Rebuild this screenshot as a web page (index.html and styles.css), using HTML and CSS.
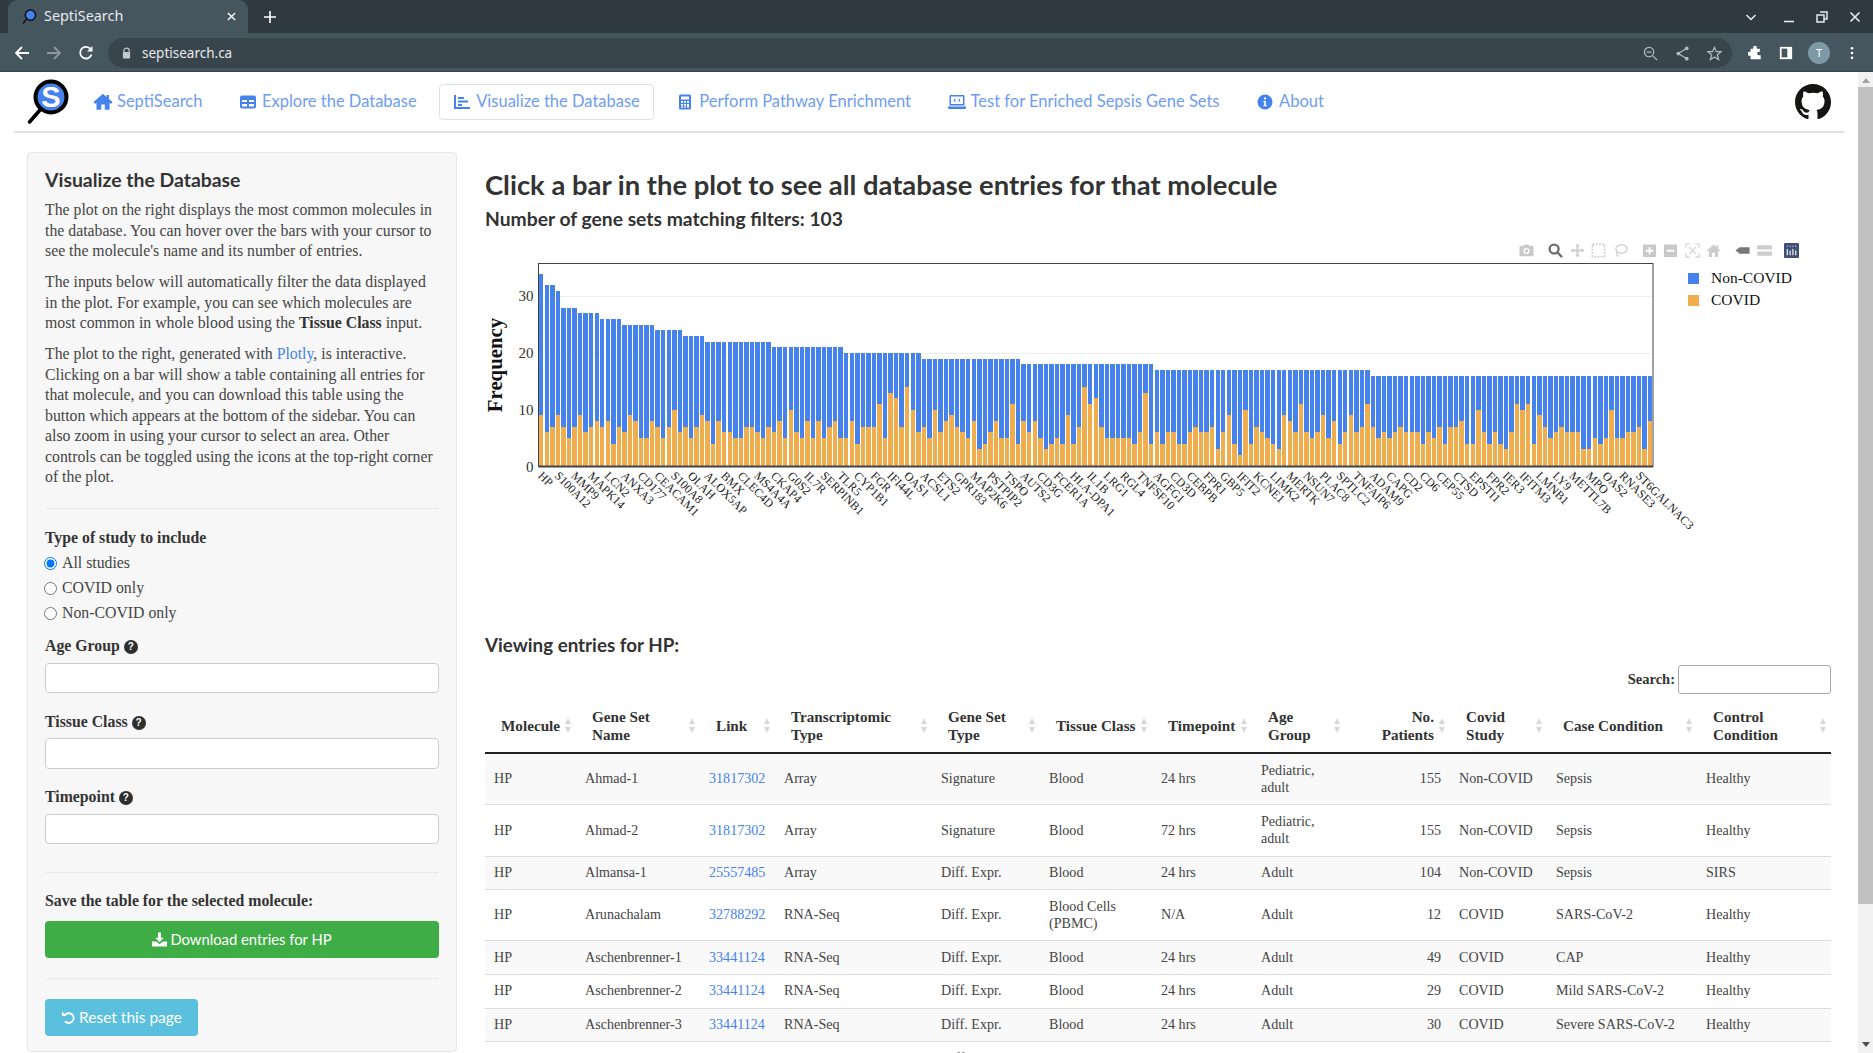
FILE: index.html
```html
<!DOCTYPE html>
<html lang="en">

<head>
    <meta charset="UTF-8">
    <meta name="viewport" content="width=device-width, initial-scale=1.0">
    <title>SeptiSearch</title>
    <link rel="stylesheet" href="styles.css">
</head>

<body>
    <!-- browser frame -->
    <div class="tab_strip">
        <div class="tab">
            <svg class="favicon" viewBox="0 0 16 16">
                <circle cx="9" cy="6.5" r="5.5" fill="#4582ec" stroke="#111" stroke-width="1.6"/>
                <path d="M5 10.5 1.5 15" stroke="#111" stroke-width="1.6" stroke-linecap="round"/>
            </svg>
            <span class="tab_title">SeptiSearch</span>
            <svg class="tab_close" viewBox="0 0 10 10"><path d="M1 1 9 9M9 1 1 9" stroke="#fff" stroke-width="1.5"/></svg>
        </div>
        <svg class="new_tab" viewBox="0 0 12 12"><path d="M6 0V12M0 6H12" stroke="#fff" stroke-width="1.6"/></svg>
        <div class="window_controls">
            <svg class="chevron" viewBox="0 0 12 12"><path d="M1.5 4 6 8.5 10.5 4" fill="none" stroke="#e8eaed" stroke-width="1.5"/></svg>
            <svg viewBox="0 0 12 12"><path d="M1 10.5H11" stroke="#e8eaed" stroke-width="1.6"/></svg>
            <svg viewBox="0 0 12 12"><path d="M4 1H11V8H8.5M1 4H8V11H1Z" fill="none" stroke="#e8eaed" stroke-width="1.5"/></svg>
            <svg viewBox="0 0 12 12"><path d="M1.5 1.5 10.5 10.5M10.5 1.5 1.5 10.5" stroke="#e8eaed" stroke-width="1.6"/></svg>
        </div>
    </div>
    <div class="toolbar">
        <svg class="tool_icon" viewBox="0 0 16 16"><path d="M15 8H2M8 2 2 8 8 14" fill="none" stroke="#fff" stroke-width="1.8"/></svg>
        <svg class="tool_icon" viewBox="0 0 16 16"><path d="M1 8H14M8 2 14 8 8 14" fill="none" stroke="#8c979e" stroke-width="1.8"/></svg>
        <svg class="tool_icon" viewBox="0 0 16 16"><path d="M13.5 9.5A5.8 5.8 0 1 1 12 3.5" fill="none" stroke="#fff" stroke-width="1.8"/><path d="M14.5 1V6.5H9Z" fill="#fff"/></svg>
        <div class="address_bar">
            <svg class="lock" viewBox="0 0 10 13"><path d="M2 6V4a3 3 0 0 1 6 0V6" fill="none" stroke="#c4c9cc" stroke-width="1.3"/><rect x="1" y="5.5" width="8" height="7" rx="1" fill="#c4c9cc"/></svg>
            <span class="url">septisearch.ca</span>
            <div class="address_icons">
                <svg viewBox="0 0 16 16"><circle cx="6.5" cy="6.5" r="5" fill="none" stroke="#b4bbc0" stroke-width="1.3"/><path d="M4 6.5H9M10.5 10.5 15 15" stroke="#b4bbc0" stroke-width="1.3"/></svg>
                <svg viewBox="0 0 16 16"><path d="M12.5 2.5 3.5 8 12.5 13.5" fill="none" stroke="#b4bbc0" stroke-width="1.2"/><circle cx="12.5" cy="2.5" r="2" fill="#b4bbc0"/><circle cx="3.5" cy="8" r="2" fill="#b4bbc0"/><circle cx="12.5" cy="13.5" r="2" fill="#b4bbc0"/></svg>
                <svg viewBox="0 0 16 16"><path d="M8 1.5 10 6H15L11 9.3 12.4 14.5 8 11.6 3.6 14.5 5 9.3 1 6H6Z" fill="none" stroke="#b4bbc0" stroke-width="1.3"/></svg>
            </div>
        </div>
        <div class="toolbar_right">
            <svg viewBox="0 0 16 16"><path d="M6 1.5a2 2 0 0 1 4 0V3h3.5V6.5h-1a2 2 0 0 0 0 4h2V15H3V11H1.5a2.2 2.2 0 0 1 0-4.4H3V3h3Z" fill="#fff"/></svg>
            <svg viewBox="0 0 16 16"><rect x="1" y="1" width="14" height="14" fill="#fff"/><rect x="3" y="3" width="6.5" height="10" fill="#45565f"/></svg>
            <span class="avatar">T</span>
            <svg viewBox="0 0 16 16"><circle cx="8" cy="2.5" r="1.5" fill="#fff"/><circle cx="8" cy="8" r="1.5" fill="#fff"/><circle cx="8" cy="13.5" r="1.5" fill="#fff"/></svg>
        </div>
    </div>

    <div class="viewport">
        <div class="page">
            <nav class="navbar">
                <svg class="logo" viewBox="0 0 44 46">
                    <circle cx="24" cy="18" r="15.5" fill="#4582ec" stroke="#000" stroke-width="4"/>
                    <path d="M13 31 2.5 43" stroke="#000" stroke-width="3.5" stroke-linecap="round"/>
                    <text class="logo_letter" x="24" y="28">S</text>
                </svg>
                <ul class="nav_links">
                    <li><a class="nav_link" href="#">
                        <svg class="home_icon" viewBox="0 0 16 16"><path d="M8 1.5 0 8.5 1.3 10 2.5 9V15H6.5V10.5H9.5V15H13.500V9L14.700 10 16 8.5 13 5.900V2.500H11V4.200Z"/></svg>SeptiSearch</a></li>
                    <li><a class="nav_link" href="#">
                        <svg viewBox="0 0 16 16"><path d="M2 1.5H14A2 2 0 0 1 16 3.5V12.5A2 2 0 0 1 14 14.5H2A2 2 0 0 1 0 12.5V3.5A2 2 0 0 1 2 1.5ZM2 6V8H7V6ZM9 6V8H14V6ZM2 10V12.5H7V10ZM9 10V12.5H14V10Z" fill-rule="evenodd"/></svg>Explore the Database</a></li>
                    <li><a class="nav_link active" href="#">
                        <svg viewBox="0 0 16 16"><path d="M0 1H2V13H16V15H0ZM4 3H10V5H4ZM4 6.5H14V8.5H4ZM4 10H8V12H4Z"/></svg>Visualize the Database</a></li>
                    <li><a class="nav_link" href="#">
                        <svg viewBox="0 0 16 16"><path d="M3.5 0.5H12.5A1.5 1.5 0 0 1 14 2V14A1.5 1.5 0 0 1 12.5 15.5H3.5A1.5 1.5 0 0 1 2 14V2A1.5 1.5 0 0 1 3.5 0.5ZM4 2.5V5.5H12V2.5ZM4 7V8.7H6V7ZM7 7V8.7H9V7ZM10 7V8.7H12V7ZM4 10V11.7H6V10ZM7 10V11.7H9V10ZM10 10V13.5H12V10ZM4 12.5V13.8H6V12.5ZM7 12.5V13.8H9V12.5Z" fill-rule="evenodd"/></svg>Perform Pathway Enrichment</a></li>
                    <li><a class="nav_link" href="#">
                        <svg viewBox="0 0 18 16"><path d="M2.5 1H15.5A1 1 0 0 1 16.5 2V11.5H1.5V2A1 1 0 0 1 2.5 1ZM3 2.5V10H15V2.5ZM0 12.5H18V13.5A1.5 1.5 0 0 1 16.5 15H1.5A1.5 1.5 0 0 1 0 13.5ZM7 4.5 5.5 6.2 7 8 7.8 7.4 6.9 6.2 7.8 5.1ZM11 4.5 12.5 6.2 11 8 10.2 7.4 11.1 6.2 10.2 5.1Z" fill-rule="evenodd"/></svg>Test for Enriched Sepsis Gene Sets</a></li>
                    <li><a class="nav_link" href="#">
                        <svg viewBox="0 0 16 16"><path d="M8 0.5A7.5 7.5 0 1 1 8 15.5 7.5 7.5 0 0 1 8 0.5ZM7 3.5V5.5H9V3.5ZM6.5 7V8.3H7.3V11H6.5V12.3H9.7V11H8.9V7Z" fill-rule="evenodd"/></svg>About</a></li>
                </ul>
                <svg class="github" viewBox="0 0 16 16"><path d="M8 0C3.58 0 0 3.58 0 8c0 3.54 2.29 6.53 5.47 7.59.4.07.55-.17.55-.38 0-.19-.01-.82-.01-1.49-2.01.37-2.53-.49-2.69-.94-.09-.23-.48-.94-.82-1.13-.28-.15-.68-.52-.01-.53.63-.01 1.08.58 1.23.82.72 1.21 1.87.87 2.33.66.07-.52.28-.87.51-1.07-1.78-.2-3.64-.89-3.64-3.95 0-.87.31-1.59.82-2.15-.08-.2-.36-1.02.08-2.12 0 0 .67-.21 2.2.82.64-.18 1.32-.27 2-.27s1.36.09 2 .27c1.53-1.04 2.2-.82 2.2-.82.44 1.1.16 1.92.08 2.12.51.56.82 1.27.82 2.15 0 3.07-1.87 3.75-3.65 3.95.29.25.54.73.54 1.48 0 1.07-.01 1.93-.01 2.2 0 .21.15.46.55.38A8.013 8.013 0 0016 8c0-4.42-3.58-8-8-8z"/></svg>
            </nav>

            <div class="content">
                <aside class="sidebar">
                    <h3 class="side_title">Visualize the Database</h3>
                    <p>The plot on the right displays the most common molecules in the database. You can hover over the bars with your cursor to see the molecule's name and its number of entries.</p>
                    <p>The inputs below will automatically filter the data displayed in the plot. For example, you can see which molecules are most common in whole blood using the <strong>Tissue Class</strong> input.</p>
                    <p>The plot to the right, generated with <a href="#">Plotly</a>, is interactive. Clicking on a bar will show a table containing all entries for that molecule, and you can download this table using the button which appears at the bottom of the sidebar. You can also zoom in using your cursor to select an area. Other controls can be toggled using the icons at the top-right corner of the plot.</p>
                    <hr class="rule_top">

                    <div class="field_label study_label">Type of study to include</div>
                    <label class="radio_row"><input type="radio" name="study" checked>All studies</label>
                    <label class="radio_row"><input type="radio" name="study">COVID only</label>
                    <label class="radio_row"><input type="radio" name="study">Non-COVID only</label>

                    <div class="field_label age_label">Age Group <span class="help">?</span></div>
                    <input class="text_input" type="text">
                    <div class="field_label next_label">Tissue Class <span class="help">?</span></div>
                    <input class="text_input" type="text">
                    <div class="field_label next_label">Timepoint <span class="help">?</span></div>
                    <input class="text_input" type="text">
                    <hr class="rule_filters">

                    <div class="field_label save_label">Save the table for the selected molecule:</div>
                    <button class="btn btn_download">
                        <svg viewBox="0 0 16 16"><path d="M6.5 0.5H9.5V6H12.5L8 10.8 3.5 6H6.5ZM0 10H4.5L8 13 11.5 10H16V15.5H0Z"/></svg>Download entries for HP</button>
                    <hr class="rule_save">
                    <button class="btn btn_reset">
                        <svg viewBox="0 0 16 16"><path d="M1 1.5 5.8 6.3H1ZM3 5A6.3 6.3 0 1 1 3.5 12.8L5 11.3A4.2 4.2 0 1 0 4.8 6.3Z"/></svg>Reset this page</button>
                </aside>

                <main class="main">
                    <h2 class="main_title">Click a bar in the plot to see all database entries for that molecule</h2>
                    <div class="match_count">Number of gene sets matching filters: 103</div>

                    <div class="plot">
                        <svg id="plot_svg" class="plot_svg" width="1346" height="392"></svg>
                        <div class="modebar">
                            <svg viewBox="0 0 16 16"><path d="M5 3 6 1.5H10L11 3H14.5A1 1 0 0 1 15.5 4V13A1 1 0 0 1 14.5 14H1.5A1 1 0 0 1 0.5 13V4A1 1 0 0 1 1.5 3ZM8 5.2A3.3 3.3 0 1 0 8 11.8 3.3 3.3 0 0 0 8 5.2ZM8 6.7A1.8 1.8 0 1 1 8 10.3 1.8 1.8 0 0 1 8 6.7Z" fill-rule="evenodd" fill="#c9c9c9"/></svg>
                            <svg class="gap_left" viewBox="0 0 16 16"><circle cx="6.5" cy="6.5" r="4.8" fill="none" stroke="#6f6f6f" stroke-width="2.5"/><path d="M10 10 15 15" stroke="#6f6f6f" stroke-width="2.5"/></svg>
                            <svg viewBox="0 0 16 16"><path d="M8 0.5 10.5 3.5H9V7H12.5V5.5L15.5 8 12.5 10.5V9H9V12.5H10.5L8 15.5 5.5 12.5H7V9H3.5V10.5L0.5 8 3.5 5.5V7H7V3.5H5.5Z" fill="#cdcdcd"/></svg>
                            <svg viewBox="0 0 16 16"><rect x="1.5" y="1.5" width="13" height="13" fill="none" stroke="#cdcdcd" stroke-width="1.8" stroke-dasharray="2 1.5"/></svg>
                            <svg viewBox="0 0 16 16"><ellipse cx="9" cy="6.5" rx="6" ry="4.5" fill="none" stroke="#cdcdcd" stroke-width="1.3"/><path d="M4.5 9.5C3.5 11 4 13 6 14.5" fill="none" stroke="#cdcdcd" stroke-width="1.3"/></svg>
                            <svg class="gap_left" viewBox="0 0 16 16"><path d="M1 1.5H15V15H1ZM7 4.5V7.3H4V9.2H7V12H9V9.2H12V7.3H9V4.5Z" fill-rule="evenodd" fill="#c9c9c9"/></svg>
                            <svg viewBox="0 0 16 16"><path d="M1 1.5H15V15H1ZM4 7.3V9.2H12V7.3Z" fill-rule="evenodd" fill="#c9c9c9"/></svg>
                            <svg viewBox="0 0 16 16"><path d="M1 5V1H5M11 1H15V5M15 11V15H11M5 15H1V11M4.5 4.5 11.5 11.5M11.5 4.5 4.5 11.5" fill="none" stroke="#cdcdcd" stroke-width="1.2"/></svg>
                            <svg viewBox="0 0 16 16"><path d="M8 1.5 0.5 8.5H3V15H6.5V10.5H9.5V15H13V8.5H15.5L13 6.2V2.5H11V4.3Z" fill="#cdcdcd"/></svg>
                            <svg class="gap_left" viewBox="0 0 16 16"><path d="M0.5 8 5 4.5H15.5V11.5H5Z" fill="#777"/></svg>
                            <svg viewBox="0 0 16 16"><path d="M2 2.5H14.5A2.2 2.2 0 0 1 14.5 7H2A2.2 2.2 0 0 1 2 2.5ZM2 9H14.5A2.2 2.2 0 0 1 14.5 13.5H2A2.2 2.2 0 0 1 2 9Z" fill="#cdcdcd"/></svg>
                            <svg class="gap_logo" viewBox="0 0 16 16"><rect width="16" height="16" rx="1" fill="#3f4f75"/><path d="M3.5 6.5V13M6.5 8V13M9.5 6.5V13M12.5 8V13" stroke="#fff" stroke-width="1.2"/><path d="M3 3.5H4M6 3.5H7M9 3.5H10M12 3.5H13" stroke="#fff" stroke-width="1.2"/></svg>
                        </div>
                    </div>

                    <h3 class="view_title">Viewing entries for HP:</h3>
                    <div class="search_row">
                        <label class="search_label" for="search_box">Search:</label>
                        <input id="search_box" class="search_box" type="text">
                    </div>

                    <table class="entries">
                        <colgroup>
                            <col class="c1"><col class="c2"><col class="c3"><col class="c4"><col class="c5"><col class="c6">
                            <col class="c7"><col class="c8"><col class="c9"><col class="c10"><col class="c11"><col class="c12">
                        </colgroup>
                        <thead>
                            <tr>
                                <th>Molecule</th>
                                <th>Gene Set<br>Name</th>
                                <th>Link</th>
                                <th>Transcriptomic<br>Type</th>
                                <th>Gene Set<br>Type</th>
                                <th>Tissue Class</th>
                                <th>Timepoint</th>
                                <th>Age<br>Group</th>
                                <th class="num">No.<br>Patients</th>
                                <th>Covid<br>Study</th>
                                <th>Case Condition</th>
                                <th>Control<br>Condition</th>
                            </tr>
                        </thead>
                        <tbody>
                            <tr><td>HP</td><td>Ahmad-1</td><td><a href="#">31817302</a></td><td>Array</td><td>Signature</td><td>Blood</td><td>24 hrs</td><td>Pediatric,<br>adult</td><td class="num">155</td><td>Non-COVID</td><td>Sepsis</td><td>Healthy</td></tr>
                            <tr><td>HP</td><td>Ahmad-2</td><td><a href="#">31817302</a></td><td>Array</td><td>Signature</td><td>Blood</td><td>72 hrs</td><td>Pediatric,<br>adult</td><td class="num">155</td><td>Non-COVID</td><td>Sepsis</td><td>Healthy</td></tr>
                            <tr><td>HP</td><td>Almansa-1</td><td><a href="#">25557485</a></td><td>Array</td><td>Diff. Expr.</td><td>Blood</td><td>24 hrs</td><td>Adult</td><td class="num">104</td><td>Non-COVID</td><td>Sepsis</td><td>SIRS</td></tr>
                            <tr><td>HP</td><td>Arunachalam</td><td><a href="#">32788292</a></td><td>RNA-Seq</td><td>Diff. Expr.</td><td>Blood Cells<br>(PBMC)</td><td>N/A</td><td>Adult</td><td class="num">12</td><td>COVID</td><td>SARS-CoV-2</td><td>Healthy</td></tr>
                            <tr><td>HP</td><td>Aschenbrenner-1</td><td><a href="#">33441124</a></td><td>RNA-Seq</td><td>Diff. Expr.</td><td>Blood</td><td>24 hrs</td><td>Adult</td><td class="num">49</td><td>COVID</td><td>CAP</td><td>Healthy</td></tr>
                            <tr><td>HP</td><td>Aschenbrenner-2</td><td><a href="#">33441124</a></td><td>RNA-Seq</td><td>Diff. Expr.</td><td>Blood</td><td>24 hrs</td><td>Adult</td><td class="num">29</td><td>COVID</td><td>Mild SARS-CoV-2</td><td>Healthy</td></tr>
                            <tr><td>HP</td><td>Aschenbrenner-3</td><td><a href="#">33441124</a></td><td>RNA-Seq</td><td>Diff. Expr.</td><td>Blood</td><td>24 hrs</td><td>Adult</td><td class="num">30</td><td>COVID</td><td>Severe SARS-CoV-2</td><td>Healthy</td></tr>
                            <tr><td>HP</td><td>Baghela-1</td><td><a href="#">35030348</a></td><td>RNA-Seq</td><td>Diff. Expr.</td><td>Blood</td><td>24 hrs</td><td>Adult</td><td class="num">82</td><td>Non-COVID</td><td>Sepsis</td><td>Mild</td></tr>
                        </tbody>
                    </table>
                </main>
            </div>
        </div>

        <div class="scrollbar">
            <span class="arrow_up"></span>
            <span class="thumb"></span>
            <span class="arrow_down"></span>
        </div>
    </div>

    <script src="chart.js"></script>
</body>

</html>
```

FILE: styles.css
```css
* {
    box-sizing: border-box;
}

html,
body {
    height: 1053px;
    margin: 0;
    overflow: hidden;
}

body {
    font-family: "Liberation Serif", serif;
    font-size: 15.8px;
    line-height: 20.5px;
    color: #444;
    background-color: #fff;
    display: flex;
    flex-direction: column;
}

a {
    color: #4582ec;
    text-decoration: none;
}

/* browser frame */
.tab_strip {
    height: 33px;
    flex: none;
    background-color: #2e3a40;
    display: flex;
    align-items: flex-end;
    padding-left: 8px;
}

.tab {
    width: 240px;
    height: 33px;
    background-color: #45565f;
    border-radius: 9px 9px 0 0;
    display: flex;
    align-items: center;
    padding: 0 12px 0 14px;
    color: #e8eaed;
    font-family: "Noto Sans", sans-serif;
    font-size: 14.4px;
}

.favicon {
    width: 15px;
    height: 17px;
    margin-right: 7px;
}

.tab_title {
    flex: 1;
}

.tab_close {
    width: 9px;
    height: 9px;
}

.new_tab {
    width: 12px;
    height: 12px;
    margin: 0 0 10px 16px;
}

.window_controls {
    margin-left: auto;
    height: 33px;
    display: flex;
    align-items: center;
    gap: 21px;
    padding-right: 12px;
}

.window_controls svg {
    width: 12px;
    height: 12px;
}

.window_controls .chevron {
    margin-right: 5px;
}

.toolbar {
    height: 39px;
    flex: none;
    background-color: #45565f;
    display: flex;
    align-items: center;
    padding: 2px 0 0 14px;
    border-bottom: 1px solid #39454c;
}

.tool_icon {
    width: 16px;
    height: 16px;
    margin-right: 16px;
}

.address_bar {
    margin-left: -2px;
    width: 1624px;
    height: 30px;
    background-color: #38454d;
    border-radius: 15px;
    display: flex;
    align-items: center;
    padding: 0 10px 0 14px;
    color: #e8eaed;
    font-family: "Noto Sans", sans-serif;
    font-size: 13.5px;
}

.lock {
    width: 9px;
    height: 12px;
    margin-right: 11px;
}

.address_icons {
    margin-left: auto;
    display: flex;
    gap: 17px;
}

.address_icons svg {
    width: 15px;
    height: 15px;
}

.toolbar_right {
    display: flex;
    align-items: center;
    margin-left: 16px;
    gap: 17px;
}

.toolbar_right svg {
    width: 14px;
    height: 14px;
}

.avatar {
    width: 22px;
    height: 22px;
    border-radius: 50%;
    background-color: #7f98a6;
    color: #fff;
    font-family: "Noto Sans", sans-serif;
    font-size: 11px;
    line-height: 22px;
    text-align: center;
    margin: 0 -2px;
}

/* page */
.viewport {
    flex: 1;
    min-height: 0;
    display: flex;
}

.page {
    flex: 1;
    min-width: 0;
    overflow: hidden;
}

.scrollbar {
    width: 15px;
    flex: none;
    background-color: #f1f1f1;
    display: flex;
    flex-direction: column;
    align-items: center;
    padding: 6px 0;
}

.arrow_up {
    border: 4px solid transparent;
    border-top: 0;
    border-bottom: 5px solid #a3a3a3;
    margin-bottom: 4px;
}

.thumb {
    width: 15px;
    height: 817px;
    background-color: #c1c1c1;
}

.arrow_down {
    border: 4px solid transparent;
    border-bottom: 0;
    border-top: 5px solid #505050;
    margin-top: auto;
}

.navbar {
    height: 61px;
    margin: 0 14px;
    border-bottom: 2px solid #dee2e6;
    display: flex;
    align-items: center;
    padding-left: 13px;
}

.logo {
    width: 44px;
    height: 46px;
    flex: none;
}

.logo_letter {
    font-family: "Liberation Sans", sans-serif;
    font-size: 29px;
    font-weight: 700;
    fill: #fff;
    text-anchor: middle;
}

.nav_links {
    display: flex;
    align-items: center;
    gap: 8.5px;
    list-style: none;
    margin: 0 0 0 8px;
    padding: 0;
}

.nav_link {
    display: flex;
    align-items: center;
    height: 36px;
    padding: 0 13px;
    border: 1px solid transparent;
    border-radius: 4px;
    font-family: Lato, sans-serif;
    font-size: 16.5px;
    color: #6f9df0;
}

.nav_link svg {
    width: 18px;
    height: 16px;
    margin-right: 5px;
    fill: #4582ec;
}

.nav_link .home_icon {
    width: 20px;
    height: 19px;
    margin-right: 4px;
}

.nav_link.active {
    border-color: #dee2e6;
}

.github {
    width: 36px;
    height: 36px;
    margin-left: auto;
    margin-right: 13px;
    fill: #151513;
}

.content {
    display: flex;
    gap: 28px;
    padding: 19px 27px 0;
    align-items: flex-start;
}

/* sidebar */
.sidebar {
    width: 430px;
    height: 900px;
    flex: none;
    background-color: #f7f7f7;
    border: 1px solid #e7e7e7;
    border-radius: 4px;
    padding: 16px 17px 0;
}

.side_title {
    margin: 0 0 9px;
    font-family: Lato, sans-serif;
    font-size: 19.4px;
    line-height: 22px;
    font-weight: 700;
    color: #333;
}

.sidebar p {
    margin: 0 0 10.5px;
}

.sidebar strong {
    color: #333;
}

hr {
    border: 0;
    border-top: 1px solid #e9e9e9;
    margin: 0;
}

.rule_top {
    margin-top: 20px;
}

.field_label {
    font-weight: 700;
    color: #333;
}

.study_label {
    margin-top: 19px;
    margin-bottom: 3px;
}

.radio_row {
    display: flex;
    align-items: center;
    height: 25px;
}

.radio_row input {
    width: 13px;
    height: 13px;
    margin: 0 5px 0 -1px;
}

.age_label {
    margin-top: 10px;
    margin-bottom: 6px;
}

.next_label {
    margin-top: 18.5px;
    margin-bottom: 6px;
}

.help {
    display: inline-block;
    width: 14px;
    height: 14px;
    border-radius: 50%;
    background-color: #2f2f2f;
    color: #fff;
    font-family: "Liberation Sans", sans-serif;
    font-size: 10px;
    line-height: 14px;
    text-align: center;
    vertical-align: 1px;
}

.text_input {
    display: block;
    width: 100%;
    height: 30.5px;
    border: 1px solid #ccc;
    border-radius: 4px;
    background-color: #fff;
}

.rule_filters {
    margin-top: 28px;
}

.save_label {
    margin-top: 18px;
    margin-bottom: 9px;
}

.btn {
    display: flex;
    align-items: center;
    justify-content: center;
    height: 37px;
    border: 0;
    border-radius: 4px;
    color: #fff;
    font-family: Lato, sans-serif;
    font-size: 15.5px;
}

.btn svg {
    width: 15px;
    height: 15px;
    margin-right: 3px;
    fill: #fff;
}

.btn_download {
    width: 100%;
    background-color: #3fad46;
    font-size: 14.8px;
}

.rule_save {
    margin-top: 20px;
    margin-bottom: 20px;
}

.btn_reset {
    width: 153px;
    background-color: #5bc0de;
}

/* main column */
.main {
    width: 1346px;
    flex: none;
}

.main_title {
    margin: 17px 0 0;
    font-family: Lato, sans-serif;
    font-size: 27.4px;
    line-height: 32px;
    font-weight: 700;
    color: #333;
}

.match_count {
    margin-top: 7px;
    font-family: Lato, sans-serif;
    font-size: 19.3px;
    line-height: 22px;
    font-weight: 700;
    color: #333;
}

.plot {
    position: relative;
    height: 392px;
    margin-top: 11px;
}

.plot_svg {
    display: block;
}

.bar_total {
    fill: #4582ec;
}

.bar_covid {
    fill: #f0ad4e;
}

.grid_line {
    stroke: #eeeeee;
}

.plot_frame {
    fill: none;
    stroke: #444;
    stroke-width: 1;
}

.tick_y {
    font-size: 15px;
    fill: #333;
    text-anchor: end;
}

.tick_x {
    font-size: 12px;
    fill: #222;
}

.axis_title {
    font-size: 20.8px;
    font-weight: 700;
    fill: #111;
    text-anchor: middle;
}

.legend_text {
    font-size: 15.5px;
    fill: #111;
}

.modebar {
    position: absolute;
    top: 2px;
    right: 32.5px;
    display: flex;
    gap: 6.5px;
}

.modebar svg {
    width: 15px;
    height: 15px;
}

.modebar .gap_left {
    margin-left: 7.5px;
}

.modebar .gap_logo {
    margin-left: 5.5px;
}

.view_title {
    margin: 0;
    font-family: Lato, sans-serif;
    font-size: 18.8px;
    line-height: 24px;
    font-weight: 700;
    color: #333;
}

.search_row {
    display: flex;
    justify-content: flex-end;
    align-items: center;
    margin-top: 8px;
}

.search_label {
    font-weight: 700;
    font-size: 14.5px;
    color: #333;
    margin-right: 3px;
}

.search_box {
    width: 153px;
    height: 29px;
    border: 1px solid #aaa;
    border-radius: 3px;
    background-color: #fff;
}

.entries {
    width: 1346px;
    table-layout: fixed;
    border-collapse: collapse;
    margin-top: 5px;
    font-size: 14.1px;
    line-height: 17.6px;
}

.c1 { width: 91px; }
.c2 { width: 124px; }
.c3 { width: 75px; }
.c4 { width: 157px; }
.c5 { width: 108px; }
.c6 { width: 112px; }
.c7 { width: 100px; }
.c8 { width: 93px; }
.c9 { width: 105px; }
.c10 { width: 97px; }
.c11 { width: 150px; }
.c12 { width: 134px; }

.entries th {
    position: relative;
    padding: 9px 16px 9px 16px;
    border-bottom: 2px solid #222;
    text-align: left;
    font-size: 15.2px;
    font-weight: 700;
    color: #333;
    white-space: nowrap;
}

/* sort arrows */
.entries th::before,
.entries th::after {
    content: "";
    position: absolute;
    right: 5px;
    top: 50%;
    border: 3.5px solid transparent;
}

.entries th::before {
    margin-top: -8px;
    border-top: 0;
    border-bottom: 6px solid #d8d8d8;
}

.entries th::after {
    margin-top: 1px;
    border-bottom: 0;
    border-top: 6px solid #d8d8d8;
}

.entries td {
    padding: 7.5px 9px;
    border-top: 1px solid #ddd;
    vertical-align: middle;
    white-space: nowrap;
}

.entries tbody tr:first-child td {
    border-top: 0;
}

.entries tbody tr:nth-child(odd) {
    background-color: #f9f9f9;
}

.entries .num {
    text-align: right;
}
```

FILE: chart.js
```js
// stacked bars for the top molecules, drawn into the svg
const runs = [[34, 1], [32, 2], [31, 1], [28, 3], [27, 4], [26, 4], [25, 6], [24, 5], [23, 4], [22, 12], [21, 13],
    [20, 14], [19, 18], [18, 24], [17, 39], [16, 51]];
const covid = [9, 6, 7, 9, 7, 5, 7, 9, 6, 7, 8, 7, 8, 4, 7, 6, 9, 8, 5, 5, 8, 7, 5, 7, 10, 6, 7, 5, 7, 9, 8, 4, 8, 6, 6, 5, 5,
    7, 7, 6, 5, 7, 6, 8, 5, 10, 6, 5, 8, 5, 8, 5, 7, 8, 5, 5, 8, 4, 7, 7, 7, 11, 5, 13, 12, 7, 14, 10, 6, 7, 5, 10,
    6, 8, 9, 7, 6, 5, 8, 3, 4, 6, 8, 5, 5, 11, 4, 8, 6, 8, 5, 3, 4, 5, 4, 9, 4, 7,
    14, 11, 12, 7, 5, 5, 5, 5, 5, 4, 6, 13, 4,
    6, 4, 6, 6, 4, 4, 6, 7, 6, 6, 7, 3, 6, 9, 4, 2, 10, 4, 7, 6, 5, 4, 3, 9, 8, 6, 11, 6, 5, 6, 9, 5, 8, 4, 6, 9, 6, 7, 11,
    7, 5, 6, 5, 6, 7, 6, 6, 6, 4, 6, 5, 7, 4, 7, 7, 8, 4, 4, 10, 6, 4, 6, 4, 3, 6, 11, 10, 11, 4, 9, 7, 5, 6, 7, 6, 6, 6, 3, 3,
    5, 4, 5, 10, 5, 5, 6, 6, 7, 3, 8];
const names = ['HP', 'S100A12', 'MMP9', 'MAPK14', 'LCN2', 'ANXA3', 'CD177', 'CEACAM1', 'S100A8', 'OLAH', 'ALOX5AP', 'BMX',
    'CLEC4D', 'MS4A4A', 'CKAP4', 'G0S2', 'IL7R', 'SERPINB1', 'TLR5', 'CYP1B1', 'FGR', 'IFI44L', 'OAS1', 'ACSL1', 'ETS2',
    'GPR183', 'MAP2K6', 'PSTPIP2', 'TSPO', 'AUTS2', 'CD3G', 'FCER1A', 'HLA-DPA1', 'IL1B', 'LRG1', 'RGL4', 'TNFSF10', 'AGFG1',
    'CD3D', 'CEBPB', 'FPR1', 'GBP5', 'IFIT2', 'KCNE1', 'LIMK2', 'MERTK', 'NSUN7', 'PLAC8', 'SPTLC2', 'TNFAIP6', 'ADAM9',
    'CAPG', 'CD2', 'CD6', 'CEP55', 'CTSD', 'EPSTI1', 'FPR2', 'IER3', 'IFITM3', 'LMNB1', 'LY9', 'METTL7B', 'MPO', 'OAS2',
    'RNASE3', 'ST6GALNAC3'];

const totals = [];
runs.forEach(([value, count]) => {
    for (let i = 0; i < count; i++) totals.push(value);
});

const svg = document.getElementById('plot_svg');
const left = 53.5;
const right = 1168;
const top_y = 22.5;
const zero_y = 225.5;
const unit = 5.67;
const step = (right - left) / totals.length;

function add(tag, attrs, text) {
    const node = document.createElementNS('http://www.w3.org/2000/svg', tag);
    Object.keys(attrs).forEach((key) => node.setAttribute(key, attrs[key]));
    if (text !== undefined) node.textContent = text;
    svg.appendChild(node);
    return node;
}

[10, 20, 30].forEach((value) => {
    const y = Math.round(zero_y - value * unit) + 0.5;
    add('line', { class: 'grid_line', x1: left, x2: right, y1: y, y2: y });
});

totals.forEach((total, i) => {
    const x = left + i * step + step * 0.1;
    const w = step * 0.8;
    const base = covid[i] * unit;
    add('rect', { class: 'bar_covid', x: x, y: zero_y - base, width: w, height: base, 'shape-rendering': 'crispEdges' });
    add('rect', { class: 'bar_total', x: x, y: zero_y - total * unit, width: w, height: (total - covid[i]) * unit, 'shape-rendering': 'crispEdges' });
});

add('rect', { class: 'plot_frame', x: left, y: top_y, width: right - left, height: zero_y - top_y });
add('line', { x1: left, x2: right, y1: zero_y, y2: zero_y, stroke: '#444', 'stroke-width': 2 });

[0, 10, 20, 30].forEach((value) => {
    add('text', { class: 'tick_y', x: left - 5, y: zero_y - value * unit + 5 }, value);
});

names.forEach((name, i) => {
    const x = left + (i * 3 + 0.5) * step - 4;
    const y = zero_y + 10;
    add('text', { class: 'tick_x', x: x, y: y, transform: `rotate(45 ${x} ${y})` }, name);
});

add('text', { class: 'axis_title', x: 17, y: 124, transform: 'rotate(-90 17 124)' }, 'Frequency');

add('rect', { x: 1203, y: 32, width: 11, height: 11, fill: '#4582ec' });
add('rect', { x: 1203, y: 54, width: 11, height: 11, fill: '#f0ad4e' });
add('text', { class: 'legend_text', x: 1226, y: 42 }, 'Non-COVID');
add('text', { class: 'legend_text', x: 1226, y: 64 }, 'COVID');
```
